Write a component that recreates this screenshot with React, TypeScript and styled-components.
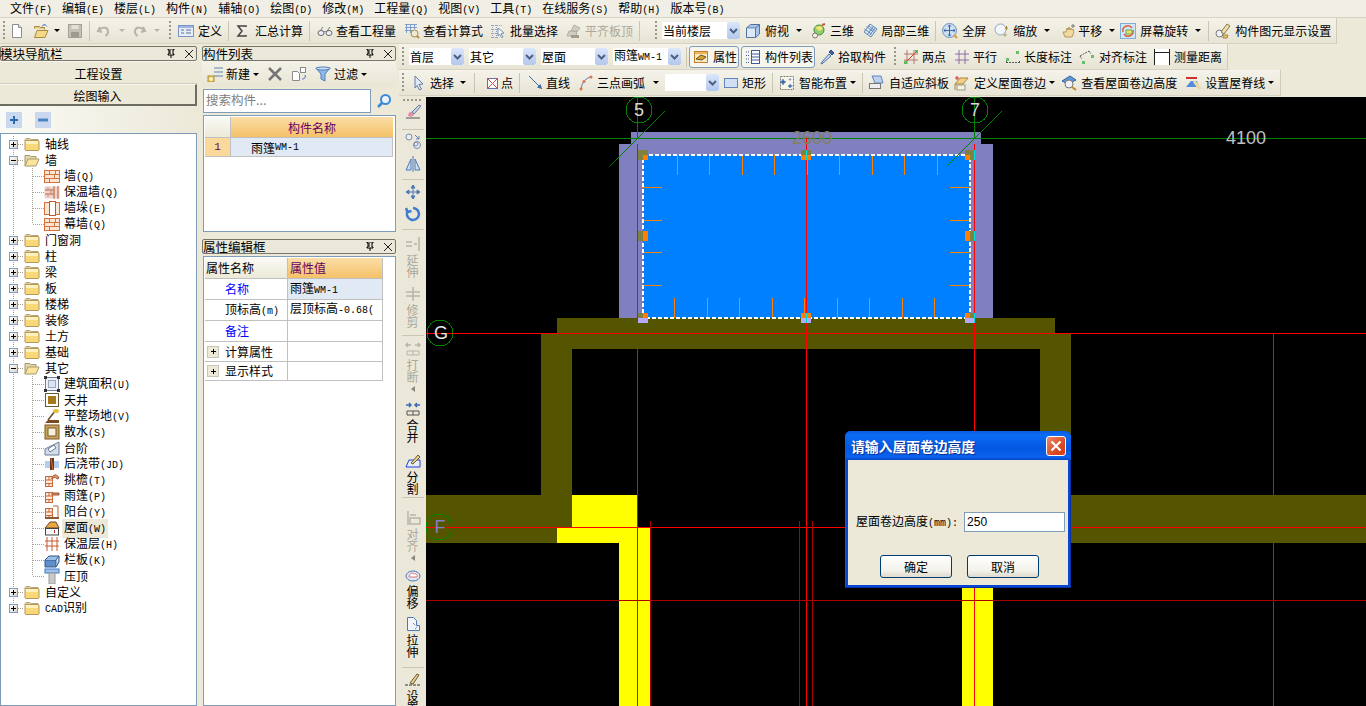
import React from 'react';
import styled, { createGlobalStyle } from 'styled-components';

const Global = createGlobalStyle`
  html, body { margin: 0; padding: 0; background: #ece9d8; overflow: hidden; }
  body { font-family: "Noto Sans CJK SC", "Liberation Sans", sans-serif; font-size: 12px; color: #000; }
  * { box-sizing: border-box; }
`;

const Root = styled.div`
  width: 1366px; height: 706px; overflow: hidden; display: flex; flex-direction: column; background: #ece9d8;
`;
const Latin = styled.span`
  font-family: "Liberation Mono", monospace; font-size: 10px;
`;
const T = ({ s }: { s: string }) => (
  <>
    {s.split(/([\x20-\x7e]+)/).map((p, i) => (/^[\x20-\x7e]+$/.test(p) ? <Latin key={i}>{p}</Latin> : p))}
  </>
);

/* ---------- icons ---------- */
const Svg = styled.svg`
  width: 16px; height: 16px; flex: none; display: block;
`;
const brick = (
  <>
    <rect x="0.500" y="2.500" width="15" height="12" fill="#fbe6d4" stroke="#d9703a" />
    <path d="M1 6.500h14M1 10.500h14M5.500 3v3.500M10.500 6.500v4M5.500 10.500v4M11.500 3v3.500" stroke="#d9703a" fill="none" />
  </>
);
const roofSide = (
  <>
    <rect x="1.500" y="4.500" width="7" height="10" fill="#fde7d6" stroke="#c9683a" />
    <path d="M2 8h6M2 11.500h6M5 5v3M5 11.500v3" stroke="#c9683a" />
  </>
);
const icons: Record<string, React.ReactNode> = {
  new: <><path d="M3.500 1.500h6l3 3v10h-9z" fill="#fff" stroke="#8d8d8d" /><path d="M9.500 1.500v3h3" fill="#dfe7f5" stroke="#8d8d8d" /></>,
  open: <><path d="M1.500 5.500l0-2h5l1 1h4v2" fill="#e8cf86" stroke="#a98a3c" /><path d="M1.500 14.500l2.500-7h11l-3 7z" fill="#f5d889" stroke="#a98a3c" /><path d="M9 3.500c1-2 3-2.500 4-1l1 1" stroke="#3e6fc6" fill="none" /></>,
  save: <><rect x="1.500" y="1.500" width="13" height="13" fill="#c4c2b4" stroke="#a3a195" /><rect x="4.500" y="2" width="7" height="4" fill="#e3e1d6" /><rect x="4" y="9" width="8" height="5" fill="#9d9b8f" /></>,
  undo: <path d="M4 4l-2 4 4 1M3 8c2-4 8-5 9 0 .4 2-1 4-2.500 5" fill="none" stroke="#b7b5a7" strokeWidth="2" />,
  redo: <path d="M12 4l2 4-4 1M13 8C11 4 5 3 4 8c-.4 2 1 4 2.500 5" fill="none" stroke="#b7b5a7" strokeWidth="2" />,
  define: <><rect x="0.500" y="2.500" width="15" height="11" fill="#e7eefa" stroke="#7a94c4" /><rect x="1" y="3" width="14" height="2" fill="#9fb7e0" /><path d="M3 7h3M3 10h3M8 7h5M8 10h5" stroke="#5a6f98" /></>,
  sigma: <path d="M12 4V3H4l4 5-4 5h8v-1" fill="none" stroke="#444" strokeWidth="1.500" />,
  glasses: <><ellipse cx="4" cy="10" rx="3" ry="2.500" fill="#eef" stroke="#666" /><ellipse cx="12" cy="10" rx="3" ry="2.500" fill="#eef" stroke="#666" /><path d="M7 9c1-1 1-1 2 0M3 8l3-4M10 8l3-4" stroke="#777" fill="none" /></>,
  calc: <><path d="M1 1.500h12M1 4.500h12M1 7.500h7M2.500 1v9M6.500 1v9M10.500 1v5" stroke="#7d9cd0" fill="none" /><circle cx="10.500" cy="10.500" r="3.500" fill="#f0ead0" stroke="#998b55" /><path d="M13 13l2 2" stroke="#c08a30" strokeWidth="2" /></>,
  batch: <><path d="M1 2.500h12M1 6.500h9M1 10.500h8M1 14.500h8M2.500 2v13M6.500 2v13" stroke="#8fa6c8" strokeDasharray="1 1" fill="none" /><path d="M8 5l6 5-3 .5 2 3.500-1.500.5-2-3.500-1.500 2z" fill="#fff" stroke="#7d8fb0" /></>,
  flatTop: <><path d="M1 13l2-5h8l-1 5zM5 8l3-6 6 3-3 4z" fill="#cfcdc0" stroke="#b3b1a3" /><rect x="5" y="12" width="8" height="3" fill="#9e9c90" /></>,
  cube: <><path d="M1.500 5l4-3.500h9V11l-4 3.500H1.500z" fill="#a9c5e8" stroke="#52749f" /><path d="M1.500 5h9v9.500M10.500 5l4-3.500" fill="none" stroke="#52749f" /><rect x="2" y="5.500" width="8" height="8.500" fill="#dde9f7" /></>,
  three: <><circle cx="8" cy="7" r="5" fill="#8fcf72" stroke="#4d8a3c" /><path d="M4 4l6-1 2 3-4 2z" fill="#f7e56d" /><circle cx="4" cy="12.500" r="2.500" fill="#f6f2e0" stroke="#777" /><path d="M11 2l3-1" stroke="#c05a3a" strokeWidth="2" /></>,
  local: <><path d="M8 1l7 5-6 8-7-5z" fill="#dbe8f7" stroke="#5e83b2" /><path d="M4.500 3.500l7 5.500M6.500 2.500l6 5M2.500 6l7 5M11 4l-6 8M13 5l-5 7" stroke="#5e83b2" fill="none" /></>,
  full: <><circle cx="7.500" cy="7.500" r="7" fill="#cfe0f5" stroke="#6f8fbd" /><path d="M7.500 2v11M2 7.500h11" stroke="#3e68a8" /><path d="M7.500 1.500l2 2h-4zM7.500 13.500l2-2h-4zM1.500 7.500l2 2v-4zM13.500 7.500l-2 2v-4z" fill="#3e68a8" /><path d="M12 12l3 3" stroke="#d89a3c" strokeWidth="2" /></>,
  zoom: <><circle cx="6.500" cy="6.500" r="5.500" fill="#f2f5fb" stroke="#9aa4b8" /><path d="M10 11l2 2" stroke="#b8b28e" strokeWidth="3" /><path d="M12.500 3v4M11 5h3" stroke="#a68a3c" /></>,
  pan: <><path d="M3 9l2 5h7l2-5-1-3-1 1-1-2-1 2-1-3-1 3-1-2-1 4z" fill="#f0d9a0" stroke="#b79a5a" /><path d="M11 3h4M13 1v4" stroke="#777" /></>,
  rotate: <><rect x="0.500" y="0.500" width="15" height="15" fill="#cfe6f8" stroke="#7fb0d8" /><path d="M3 9a5 5 0 019-4" fill="none" stroke="#e0603c" strokeWidth="1.500" /><path d="M13 7a5 5 0 01-9 4" fill="none" stroke="#e0603c" strokeWidth="1.500" /><path d="M6 7h6v4H6z" fill="#e8e06d" stroke="#6aa84f" /></>,
  display: <><circle cx="4.500" cy="10.500" r="3.500" fill="#eef2f8" stroke="#777" /><path d="M6 9l6-8 3 2-6 8z" fill="#e9dfb0" stroke="#8a7a3c" /><path d="M8 12h5l-1 3H8z" fill="#e9c26e" stroke="#a5844a" /></>,
  attr: <><rect x="1.500" y="2.500" width="13" height="11" fill="#f7e8c8" stroke="#c47f2c" /><rect x="2" y="3" width="12" height="2" fill="#eeb45c" /><path d="M3 10l5-4 5 2-4 3z" fill="#d3a530" stroke="#6a5818" /></>,
  list: <><path d="M1 3h3M1 6.500h3M1 10h3M1 13.500h3" stroke="#3c5f98" strokeDasharray="1 1" /><rect x="6.500" y="1.500" width="8" height="13" fill="#fff" stroke="#3c5f98" /><path d="M7 5h7M7 8h7M7 11h7" stroke="#3c5f98" /></>,
  pick: <><path d="M3 13l7-8 2 2-8 7-2 1z" fill="#cde" stroke="#4870a8" /><path d="M10 3l2-2 3 3-2 2z" fill="#3e68a8" stroke="#2d4a80" /></>,
  twoPt: <><path d="M4 1v14M11 1v14M1 5h14M1 11h14" stroke="#b07a70" /><path d="M2 14L14 2" stroke="#e03020" /><rect x="1" y="12" width="3" height="3" fill="#5cb85c" /><rect x="12" y="1" width="3" height="3" fill="#5cb85c" /></>,
  parallel: <path d="M5 1v14M11 1v14M1 5h14M1 11h14" stroke="#8a6fa8" fill="none" />,
  lenDim: <><rect x="11" y="2" width="3" height="3" fill="#66c066" /><rect x="1" y="9" width="3" height="3" fill="#66c066" /><path d="M1.500 12v3M14.500 12v3M1 13.500h14" stroke="#555" strokeDasharray="2 1" /></>,
  alignDim: <><rect x="12" y="6" width="3" height="3" fill="#66c066" /><rect x="3" y="12" width="3" height="3" fill="#66c066" /><path d="M1 7l9-5M1 7l2 3M10 2l2 3" stroke="#555" strokeDasharray="2 1" fill="none" /></>,
  measure: <><rect x="0" y="0" width="16" height="16" fill="#fff" /><path d="M.5 0v16M15.500 0v16M0 3.500h16" stroke="#222" /></>,
  cursor: <path d="M5 1l8 8-4 .5 2.500 4.500-2 1-2.500-4.500L5 13z" fill="#dfe8f7" stroke="#6a7fa6" />,
  point: <><rect x="3.500" y="3.500" width="10" height="10" fill="#fff" stroke="#6072a8" /><path d="M4 4l9 9M13 4l-9 9" stroke="#d84a4a" /></>,
  line: <><path d="M1 1l13 13" stroke="#3e68a8" /><path d="M14 14l-5-1.500 3.500-3.500z" fill="#3e68a8" /></>,
  arc: <><path d="M3 14C4 7 8 3 13 2" stroke="#5a78b0" fill="none" /><circle cx="3" cy="14" r="1.500" fill="#e07050" /><circle cx="6" cy="6.500" r="1.500" fill="#e07050" /><circle cx="13" cy="2" r="1.500" fill="#e07050" /></>,
  rect: <rect x="1.500" y="3.500" width="13" height="9" fill="#d2e0f5" stroke="#6484bc" />,
  smart: <><rect x="1.500" y="1.500" width="13" height="13" fill="#f8f6ec" stroke="#7a7a6a" strokeDasharray="2 1" /><path d="M4 4l1 2 2 1-2 1-1 2-1-2-2-1 2-1zM11 9l1 1.500 1.500.5-1.500.5-1 1.500-1-1.500L9 11l1.500-.5zM11 3v3M9.500 4.500h3" fill="#3e68a8" stroke="#3e68a8" strokeWidth=".5" /></>,
  slope: <><path d="M4 1h9l2 7H7z" fill="#bcd3f0" stroke="#6484bc" /><rect x="1.500" y="8.500" width="11" height="5" fill="#eee" stroke="#777" /></>,
  roofEdge: <><path d="M1 15V9h8l5-6h-8l-5 6" fill="#f0d08a" stroke="#a8863c" /><rect x="3" y="10" width="8" height="5" fill="#f6f2e0" stroke="#9a9a8a" /><path d="M3 1v4M1 3h4" stroke="#d03030" /></>,
  viewEdge: <><path d="M1 6l8-5 6 4-8 4z" fill="#5f96d8" stroke="#34649e" /><circle cx="8" cy="9" r="4" fill="#eef2f8" stroke="#777" /><path d="M11 12l4 3" stroke="#c08a30" strokeWidth="2" /></>,
  ridge: <><path d="M1 3h11" stroke="#d03030" strokeWidth="2" /><path d="M1 12l5-6h6l2 6z" fill="#4f8de0" /><path d="M9 6l6 8" stroke="#e8d9a0" strokeWidth="3" /></>,
  newItem: <><path d="M7 2h9M7 6h9M7 10h9" stroke="#5e83b2" /><rect x="1" y="10" width="6" height="6" fill="#f0d058" stroke="#b08a30" /><path d="M4 11v4M2 13h4" stroke="#fff" /></>,
  del: <path d="M2 2l12 12M14 2L2 14" stroke="#757575" strokeWidth="2.500" />,
  copy: <><path d="M1.500 5.500h5l2 2v7h-7z" fill="#fff" stroke="#8a8a8a" /><rect x="9.500" y="1.500" width="5" height="5" fill="#fff" stroke="#8a8a8a" /><path d="M14 9c1 3-1 4-3 4" stroke="#3e68c8" fill="none" /></>,
  filter: <><path d="M1 2h14l-5 6v7l-4-2V8z" fill="#8fb8e6" stroke="#4f7eb8" /><ellipse cx="8" cy="2.500" rx="7" ry="1.500" fill="#cfe2f7" stroke="#4f7eb8" /></>,
  search: <><circle cx="9.500" cy="6.500" r="4.500" fill="#eaf4fd" stroke="#3a8ad8" strokeWidth="2" /><path d="M6 10l-4 4" stroke="#3a8ad8" strokeWidth="2.500" /></>,
  plusBlue: <><rect x="0" y="0" width="16" height="16" fill="#c9d8ee" /><path d="M8 4v8M4 8h8" stroke="#2a6cb0" strokeWidth="2" /></>,
  minusBlue: <><rect x="0" y="0" width="16" height="16" fill="#c9d8ee" /><path d="M3 8h10" stroke="#4f84c0" strokeWidth="3" /></>,
  folder: <><path d="M1 5V3.500L2 2.500h4l1 1h7V5z" fill="#e0d5ad" stroke="#b3a476" /><rect x="1" y="4.500" width="14" height="10" rx="1" fill="#f8d878" stroke="#b49a55" /><rect x="2" y="5" width="12" height="3" fill="#fdf0bd" /></>,
  folderOpen: <><path d="M1 14V3.500h5l1 1h5V7" fill="#e0d5ad" stroke="#a89a6a" /><path d="M1 14l3-7h11l-3 7z" fill="#fbe59c" stroke="#a89a6a" /></>,
  wall: brick,
  insul: <><rect x="0.500" y="2.500" width="15" height="12" fill="#ecd3cf" /><path d="M10 2v13M14 2v13M1 6h9M1 10h9" stroke="#c4602f" fill="none" /><path d="M3 4h2M6 8h2M3 12h2" stroke="#b88" /></>,
  pier: <><rect x="0.500" y="2.500" width="15" height="12" fill="#fbe6d4" stroke="#d9703a" /><rect x="5.500" y="1.500" width="6" height="14" fill="#fff" stroke="#c05a2a" /></>,
  area: <><rect x="1.500" y="1.500" width="13" height="13" fill="#eef2f8" stroke="#6f7f98" /><rect x="4.500" y="4.500" width="7" height="7" fill="#dbe4f0" stroke="#9aa8bc" /><path d="M0 0h3v3H0zM13 0h3v3h-3zM0 13h3v3H0zM13 13h3v3h-3z" fill="#333" /></>,
  well: <><rect x="1.500" y="1.500" width="13" height="13" fill="#fff" stroke="#6a5a30" /><rect x="4" y="4" width="8" height="8" fill="#a8791a" /></>,
  site: <><path d="M1 15l3-3h11v3z" fill="#7a4a20" /><path d="M4 12l7-9" stroke="#6a4a20" strokeWidth="1.500" /><ellipse cx="12" cy="3" rx="3" ry="2" fill="#e8c040" /></>,
  drain: <><rect x="1" y="1" width="14" height="14" fill="#c9a25e" stroke="#7a5a20" /><rect x="4" y="4" width="8" height="8" fill="#f4f0e0" stroke="#7a5a20" /></>,
  steps: <><path d="M1 15V9l6-3 8-4v13z" fill="#d3ddea" stroke="#6a7a98" /><path d="M4 9l6-4 2 3-6 4z" fill="#fff" stroke="#6a7a98" /></>,
  band: <><rect x="1" y="5" width="14" height="7" fill="#b5cdea" /><rect x="6" y="2" width="4" height="12" fill="#6a3418" /><path d="M7 2l2 12" stroke="#d9703a" /></>,
  eaves: <>{roofSide}<path d="M8 5c2-3 5-3 7 1l-2 1c-1-2-3-2-5 0z" fill="#e0956a" stroke="#a05a30" /></>,
  canopy: <>{roofSide}<path d="M8 5h7v2H8z" fill="#d08a60" stroke="#a05a30" /></>,
  balcony: <>{roofSide}<path d="M1 14h14" stroke="#8a5a30" strokeWidth="2" /><path d="M9 2h5v12" stroke="#b0663a" fill="none" /></>,
  roof: <><path d="M1 8l5-6h6l3 6z" fill="#e8a848" stroke="#6a4a20" /><rect x="1.500" y="8.500" width="13" height="6.500" fill="#f8f8f8" stroke="#444" /><rect x="10" y="10" width="1" height="3" fill="#c03030" /></>,
  insLayer: <path d="M3 1v14M8 1v14M13 1v14M1 5h14M1 10h14" stroke="#c85a30" fill="none" />,
  rail: <><path d="M1 8h11v7H1z" fill="#5f8ec8" stroke="#2d5a90" /><path d="M1 8l4-4h10l-3 4M15 4v6l-3 5" fill="#9dbfe6" stroke="#2d5a90" /></>,
  cap: <><rect x="1" y="1" width="14" height="4" fill="#9fc4ee" stroke="#3e7ac8" /><rect x="5" y="5" width="6" height="11" fill="#c9c9c9" stroke="#999" /></>,
  brush: <><path d="M1 14h14" stroke="#555" /><path d="M3 12c0-3 2-5 4-4l2 3c-1 2-4 2-6 1z" fill="#e090a8" /><path d="M7 8l7-7 2 1-7 8z" fill="#c8d8ec" stroke="#6a7a98" /></>,
  offsetC: <><circle cx="4" cy="4" r="3" fill="#e8eef8" stroke="#7a8aa8" /><circle cx="12" cy="12" r="3.500" fill="#e8eef8" stroke="#7a8aa8" /><circle cx="11" cy="11" r="2" fill="none" stroke="#7a8aa8" /><path d="M10 2l4 4m0-3v3h-3" fill="none" stroke="#5e83b2" /></>,
  mirror: <path d="M8 0v16M6 3L1 14h5zM10 3l5 11h-5z" fill="#cfdff3" stroke="#4f78b8" />,
  move: <path d="M8 1v14M1 8h14M8 1l-2 3h4zM8 15l-2-3h4zM1 8l3-2v4zM15 8l-3-2v4z" fill="#4f78b8" stroke="#4f78b8" />,
  spin: <path d="M8 2a6 6 0 11-5.500 3.500M1 2l1.500 4 4-1" fill="none" stroke="#3e7ad0" strokeWidth="2.500" />,
  extend: <path d="M1 6h6M1 10h6M9 8h3M14 1v14" stroke="#b7b5a7" strokeWidth="1.500" fill="none" />,
  trim: <path d="M1 6h14M1 10h14M8 1v14" stroke="#b7b5a7" strokeWidth="1.500" fill="none" />,
  breakI: <><path d="M1 4h5M10 4h5M3 2L1 4l2 2M13 2l2 2-2 2" stroke="#b7b5a7" fill="none" strokeWidth="1.500" /><path d="M2 10h12v4H2zM8 10v4" stroke="#b7b5a7" fill="none" /></>,
  merge: <><path d="M1 4h5M10 4h5M4 2l2 2-2 2M12 2l-2 2 2 2" stroke="#3e68b8" fill="none" strokeWidth="1.500" /><path d="M2 10h12v4H2zM8 10v4" stroke="#555" fill="none" /></>,
  split: <><path d="M1 14l3-7h11v7z" fill="#e8eef8" stroke="#2040e0" /><path d="M6 10L13 2l2 2-7 7z" fill="#e8d090" stroke="#6a5a30" /></>,
  alignI: <path d="M3 1v14M5 8h10v6H5zM5 5h6" stroke="#b7b5a7" fill="none" strokeWidth="1.500" />,
  cloud: <><ellipse cx="8" cy="9" rx="7" ry="5" fill="#dfe9f6" stroke="#4f78b8" /><path d="M4 10c0-3 3-5 5-3 2-1 4 1 3 3z" fill="#fff" stroke="#e07070" /></>,
  stretch: <><path d="M2.500 1.500h6l3 3v5h3v5h-12z" fill="#f2f6fc" stroke="#4f78b8" /><path d="M8 7l3 3M10 13l3-3" stroke="#555" strokeDasharray="1 1" /></>,
  setI: <><path d="M0 13h16" stroke="#333" strokeDasharray="3 1" /><path d="M5 11l7-9 2 1-6 9z" fill="#e8d090" stroke="#6a5a30" /></>,
};
const Icon = ({ n }: { n: string }) => <Svg viewBox="0 0 16 16">{icons[n]}</Svg>;

/* ---------- menu + toolbars ---------- */
const MenuBar = styled.div`
  height: 17px; flex: none; display: flex; align-items: center; gap: 10px; padding: 1px 0 0 10px;
  background: #f1efe5; line-height: 16px;
`;
const MenuItem = styled.span`white-space: nowrap;`;
const TopStrip = styled.div`
  height: 27px; flex: none; background: #ece9d8; border-top: 1px solid #d6d3c2;
`;
const Bar = styled.div`
  display: flex; align-items: center; height: 26px; width: fit-content; padding-right: 5px;
  background: linear-gradient(#f5f3ea, #e7e4d4); border-right: 1px solid #cfccb9; border-bottom: 1px solid #d6d3c2;
`;
const Tool = styled.div<{ $ml: number; $gap: number; $off?: boolean }>`
  display: flex; align-items: center; flex: none; margin-left: ${p => p.$ml}px; gap: ${p => p.$gap}px;
  white-space: nowrap; color: ${p => (p.$off ? '#aca899' : '#000')}; line-height: 16px;
`;
const Toggle = styled(Tool)`
  height: 22px; padding: 0 1px 0 3px; border: 1px solid #7f9db9; border-radius: 3px; background: #f6f5ee;
`;
const CaretMark = styled.i<{ $ml: number; $off?: boolean }>`
  flex: none; width: 0; height: 0; margin-left: ${p => p.$ml}px; margin-right: 1px;
  border-left: 3px solid transparent; border-right: 3px solid transparent;
  border-top: 3px solid ${p => (p.$off ? '#b7b5a7' : '#000')};
`;
const Sep = styled.i<{ $ml: number }>`
  flex: none; width: 1px; height: 20px; margin-left: ${p => p.$ml}px; background: #c9c6b4;
`;
const Grip = styled.i<{ $ml: number }>`
  flex: none; width: 2px; height: 19px; margin-left: ${p => p.$ml}px;
  background: repeating-linear-gradient(to bottom, #9a9884 0 2px, transparent 2px 4px);
`;
const Combo = styled.div<{ $ml: number; $w: number }>`
  flex: none; display: flex; align-items: center; justify-content: space-between; height: 17px;
  margin-left: ${p => p.$ml}px; width: ${p => p.$w}px; padding-left: 1px; background: #fff; line-height: 16px; white-space: nowrap;
`;
const ComboArrow = styled.span`
  flex: none; width: 13px; height: 17px; border-radius: 2px; background: linear-gradient(#dbe6f9, #b3c8ee);
  display: flex; align-items: center; justify-content: center;
`;
const Arrow = () => (
  <ComboArrow>
    <svg width="9" height="6" viewBox="0 0 9 6"><path d="M1 1l3.500 3.500L8 1" fill="none" stroke="#4d6185" strokeWidth="2" /></svg>
  </ComboArrow>
);

type Item =
  | { k: 'tool'; ml: number; gap?: number; icon: string; label?: string; off?: boolean; on?: boolean }
  | { k: 'caret'; ml: number; off?: boolean }
  | { k: 'sep'; ml: number }
  | { k: 'grip'; ml: number }
  | { k: 'combo'; ml: number; w: number; text: string };

const tool = (ml: number, icon: string, label?: string, gap = 3, off = false): Item => ({ k: 'tool', ml, icon, label, gap, off });
const caret = (ml: number, off = false): Item => ({ k: 'caret', ml, off });
const sep = (ml: number): Item => ({ k: 'sep', ml });
const grip = (ml: number): Item => ({ k: 'grip', ml });
const combo = (ml: number, w: number, text: string): Item => ({ k: 'combo', ml, w, text });

const Items = ({ items }: { items: Item[] }) => (
  <>
    {items.map((it, i) => {
      if (it.k === 'caret') return <CaretMark key={i} $ml={it.ml} $off={it.off} />;
      if (it.k === 'sep') return <Sep key={i} $ml={it.ml} />;
      if (it.k === 'grip') return <Grip key={i} $ml={it.ml} />;
      if (it.k === 'combo') return <Combo key={i} $ml={it.ml} $w={it.w}><span><T s={it.text} /></span><Arrow /></Combo>;
      const C = it.on ? Toggle : Tool;
      return (
        <C key={i} $ml={it.ml} $gap={it.gap ?? 3} $off={it.off}>
          <Icon n={it.icon} />
          {it.label && <span><T s={it.label} /></span>}
        </C>
      );
    })}
  </>
);

const row1: Item[] = [
  grip(3), tool(4, 'new'), tool(8, 'open'), caret(5), tool(6, 'save', undefined, 3, true), sep(6),
  tool(6, 'undo', undefined, 3, true), caret(7, true), tool(5, 'redo', undefined, 3, true), caret(7, true), grip(8),
  tool(7, 'define', '定义', 4), sep(6), tool(5, 'sigma', '汇总计算', 5), sep(6), tool(7, 'glasses', '查看工程量', 3),
  tool(8, 'calc', '查看计算式', 3), tool(7, 'batch', '批量选择', 4), tool(8, 'flatTop', '平齐板顶', 3, true), sep(6),
  grip(15), combo(5, 78, '当前楼层'), tool(5, 'cube', '俯视', 4), caret(7), tool(8, 'three', '三维'), tool(8, 'local', '局部三维'),
  sep(6), tool(6, 'full', '全屏', 4), tool(8, 'zoom', '缩放'), caret(7), tool(9, 'pan', '平移', 2), caret(7),
  tool(4, 'rotate', '屏幕旋转', 4), caret(7), sep(6), tool(6, 'display', '构件图元显示设置', 4),
];
const row2: Item[] = [
  grip(3), combo(5, 55, '首层'), combo(5, 67, '其它'), combo(5, 67, '屋面'), combo(5, 68, '雨篷WM-1'), sep(5),
  { k: 'tool', ml: 2, icon: 'attr', label: '属性', gap: 4, on: true },
  { k: 'tool', ml: 2, icon: 'list', label: '构件列表', gap: 4, on: true },
  tool(4, 'pick', '拾取构件'), grip(8), tool(7, 'twoPt', '两点'), tool(8, 'parallel', '平行'), tool(8, 'lenDim', '长度标注'),
  tool(7, 'alignDim', '对齐标注', 4), tool(7, 'measure', '测量距离', 4),
];
const row3: Item[] = [
  grip(3), tool(6, 'cursor', '选择', 4), caret(6), sep(7), tool(9, 'point', '点', 1), sep(6), tool(8, 'line', '直线', 2),
  tool(8, 'arc', '三点画弧'), caret(8), combo(5, 54, ''), tool(4, 'rect', '矩形'), sep(6), tool(6, 'smart', '智能布置', 4), caret(3),
  sep(5), tool(5, 'slope', '自适应斜板', 5), tool(5, 'roofEdge', '定义屋面卷边', 4), caret(3), tool(5, 'viewEdge', '查看屋面卷边高度', 4),
  tool(8, 'ridge', '设置屋脊线', 4), caret(3),
];

/* ---------- panels ---------- */
const Body = styled.div`flex: 1; min-height: 0; display: flex;`;
const NavCol = styled.div`width: 197px; flex: none; padding-top: 2px; display: flex; flex-direction: column;`;
const MidCol = styled.div`width: 194px; flex: none; margin-left: 5px; padding-top: 2px; display: flex; flex-direction: column;`;
const RightCol = styled.div`flex: 1; min-width: 0; margin-left: 3px; display: flex; flex-direction: column;`;
const PanelTitle = styled.div<{ $mt?: number }>`
  height: 15px; flex: none; margin-top: ${p => p.$mt ?? 0}px; display: flex; align-items: center;
  border: 1px solid #77766a; border-radius: 2px; background: #ebe8da; line-height: 13px;
`;
const PanelName = styled.span<{ $dx?: number }>`flex: 1; font-size: 12.5px; margin-left: ${p => p.$dx ?? 0}px; white-space: nowrap;`;
const TitleIcons = styled.span`display: flex; align-items: center; gap: 10px; margin-right: 3px;`;
const Mini = () => (
  <TitleIcons>
    <svg width="8" height="9" viewBox="0 0 8 9"><path d="M1 0h6v1H6v4h1v1H1V5h1V1H1zM3 1v4M4 6v3" fill="none" stroke="#000" /></svg>
    <svg width="8" height="8" viewBox="0 0 8 8"><path d="M0 0l8 8M8 0L0 8" stroke="#222" /></svg>
  </TitleIcons>
);
const NavBtn = styled.div<{ $h: number; $pressed?: boolean }>`
  height: ${p => p.$h}px; flex: none; display: flex; align-items: center; justify-content: center; padding-top: 1px;
  background: #ece9d8; border-top: 1px solid #f8f7f0;
  ${p => (p.$pressed ? 'border-bottom: 2px solid #6e6d62; border-right: 2px solid #6e6d62;' : 'border-bottom: 1px solid #d0cdbc;')}
`;
const TreeTools = styled.div`
  height: 27px; flex: none; display: flex; align-items: center; gap: 13px; padding-left: 6px;
  background: linear-gradient(to right, #fafaf6, #ece9d8);
`;
const TreeBox = styled.div`
  flex: 1; min-height: 0; border: 1px solid #7f9db9; background: #fff; padding-top: 2px; overflow: hidden;
`;
const dotted = 'repeating-linear-gradient(to bottom, #a5a395 0 1px, transparent 1px 2px)';
const TreeRow = styled.div<{ $leaf?: boolean; $lastTop?: boolean; $lastLeaf?: boolean }>`
  height: 16px; display: flex; align-items: center; padding-left: ${p => (p.$leaf ? 32 : 8)}px; white-space: nowrap; line-height: 16px;
  background-image: ${dotted}${p => (p.$leaf ? `, ${dotted}` : '')};
  background-repeat: no-repeat;
  background-position: 12px 0${p => (p.$leaf ? ', 31px 0' : '')};
  background-size: 1px ${p => (p.$lastTop ? '50%' : '100%')}${p => (p.$leaf ? `, 1px ${p.$lastLeaf ? '50%' : '100%'}` : '')};
`;
const Expander = styled.span`
  width: 9px; height: 9px; flex: none; border: 1px solid #7f9db9; background: linear-gradient(135deg, #fff, #d8d5c6);
  display: flex; align-items: center; justify-content: center;
`;
const Sign = ({ open }: { open?: boolean }) => (
  <svg width="7" height="7" viewBox="0 0 7 7"><path d={open ? 'M1 3.500h5' : 'M1 3.500h5M3.500 1v5'} stroke="#000" /></svg>
);
const Elbow = styled.span<{ $w: number }>`
  flex: none; width: ${p => p.$w}px; height: 1px; background: repeating-linear-gradient(to right, #a5a395 0 1px, transparent 1px 2px);
`;
const NodeLabel = styled.span<{ $sel?: boolean }>`
  margin-left: 2px; padding: 0 2px; background: ${p => (p.$sel ? '#ece9d8' : 'transparent')};
`;
const FolderLabel = styled.span`margin-left: 5px;`;

type N = { f?: boolean; open?: boolean; label: string; icon?: string; sel?: boolean; last?: boolean };
const tree: N[] = [
  { f: true, label: '轴线' }, { f: true, open: true, label: '墙' },
  { label: '墙(Q)', icon: 'wall' }, { label: '保温墙(Q)', icon: 'insul' }, { label: '墙垛(E)', icon: 'pier' }, { label: '幕墙(Q)', icon: 'wall', last: true },
  { f: true, label: '门窗洞' }, { f: true, label: '柱' }, { f: true, label: '梁' }, { f: true, label: '板' }, { f: true, label: '楼梯' },
  { f: true, label: '装修' }, { f: true, label: '土方' }, { f: true, label: '基础' }, { f: true, open: true, label: '其它' },
  { label: '建筑面积(U)', icon: 'area' }, { label: '天井', icon: 'well' }, { label: '平整场地(V)', icon: 'site' }, { label: '散水(S)', icon: 'drain' },
  { label: '台阶', icon: 'steps' }, { label: '后浇带(JD)', icon: 'band' }, { label: '挑檐(T)', icon: 'eaves' }, { label: '雨篷(P)', icon: 'canopy' },
  { label: '阳台(Y)', icon: 'balcony' }, { label: '屋面(W)', icon: 'roof', sel: true }, { label: '保温层(H)', icon: 'insLayer' }, { label: '栏板(K)', icon: 'rail' },
  { label: '压顶', icon: 'cap', last: true }, { f: true, label: '自定义' }, { f: true, label: 'CAD识别', last: true },
];

const SmallBar = styled.div`
  height: 26px; flex: none; display: flex; align-items: center; background: linear-gradient(#f4f2e8, #e8e5d5);
`;
const SearchRow = styled.div`height: 24px; flex: none; margin-top: 2px; display: flex; align-items: center; padding-left: 1px;`;
const SearchBox = styled.div`
  width: 168px; height: 24px; border: 1px solid #7f9db9; background: #fff; color: #808080; padding-left: 2px; line-height: 20px; font-size: 12.5px;
`;
const SearchIcon = styled.span`margin-left: 5px; display: block;`;
const Box = styled.div<{ $h?: number; $mt: number }>`
  margin-top: ${p => p.$mt}px; margin-left: 1px; width: 193px; border: 1px solid #7f9db9; background: #fff; padding: 1px;
  ${p => (p.$h ? `height: ${p.$h}px; flex: none;` : 'flex: 1; min-height: 0;')}
`;
const ListGrid = styled.div`display: grid; grid-template-columns: 26px 162px; grid-template-rows: 21px 19px;`;
const Gold = 'linear-gradient(#fbdea6, #f4c168)';
const Corner = styled.div`background: linear-gradient(#fafaf5, #ece9d8); border-right: 1px solid #c0c0c0; border-bottom: 1px solid #c0c0c0;`;
const HeadCell = styled.div`
  background: ${Gold}; color: #660066; display: flex; align-items: center; justify-content: center; border-bottom: 1px solid #c0c0c0;
`;
const NumCell = styled.div`
  background: #fbd99a; color: #660066; display: flex; align-items: center; justify-content: center;
  border-right: 1px solid #c0c0c0; border-bottom: 1px solid #c0c0c0; font-family: "Liberation Mono", monospace; font-size: 11px;
`;
const NameCell = styled.div`
  background: #e0e9f4; padding-left: 20px; display: flex; align-items: center; border-bottom: 1px solid #c0c0c0; border-right: 1px solid #c0c0c0;
`;
const PropGrid = styled.div`
  display: grid; grid-template-columns: 83px 95px; grid-template-rows: 21px 21px 21px 21px 20px 19px; width: 178px; line-height: 16px;
`;
const PCell = styled.div<{ $v: 'name' | 'blue' | 'plain' | 'head' | 'headV' | 'val' | 'valHi'; $top?: boolean }>`
  display: flex; align-items: ${p => (p.$top ? 'flex-start' : 'center')}; overflow: hidden; white-space: nowrap;
  border-right: 1px solid #c0c0c0; border-bottom: 1px solid #c0c0c0;
  padding-left: ${p => (p.$v === 'head' ? 1 : p.$v === 'blue' || p.$v === 'plain' ? 20 : 2)}px;
  color: ${p => (p.$v === 'blue' ? '#0000ff' : p.$v === 'headV' ? '#660066' : '#000')};
  background: ${p =>
    p.$v === 'head' ? 'linear-gradient(#fafaf5, #ece9d8)' : p.$v === 'headV' ? Gold : p.$v === 'valHi' ? '#e0e9f4' : '#fff'};
`;
const PlusBox = styled.span`
  width: 12px; height: 12px; flex: none; margin-right: 6px; background: #ece9d8; border: 1px solid #c8c6b6;
  display: flex; align-items: center; justify-content: center;
`;

/* ---------- vertical toolbar ---------- */
const Work = styled.div`flex: 1; min-height: 0; display: flex; padding-top: 1px;`;
const VBar = styled.div`
  width: 27px; flex: none; height: 610px; overflow: hidden; background: #ebe8da; display: flex; flex-direction: column; align-items: center;
  color: #000;
`;
const VGrip = styled.i`
  flex: none; width: 20px; height: 2px; margin-top: 2px;
  background: repeating-linear-gradient(to right, #9a9884 0 2px, transparent 2px 4px);
`;
const VSep = styled.i<{ $mt: number }>`flex: none; width: 22px; height: 1px; margin-top: ${p => p.$mt}px; background: #c9c6b4;`;
const VIco = styled.div<{ $mt: number }>`flex: none; margin-top: ${p => p.$mt}px;`;
const VText = styled.div<{ $off?: boolean }>`
  flex: none; width: 12px; line-height: 12px; margin-top: 2px; word-break: break-all; color: ${p => (p.$off ? '#aca899' : '#000')};
`;
const VTri = styled.i`
  flex: none; width: 0; height: 0; margin-top: 3px; border-top: 3px solid transparent; border-bottom: 3px solid transparent; border-right: 4px solid #8a8878;
`;

const V = ({ mt, n, t, off, tri }: { mt: number; n: string; t?: string; off?: boolean; tri?: boolean }) => (
  <>
    <VIco $mt={mt}><Icon n={n} /></VIco>
    {t && <VText $off={off}>{t}</VText>}
    {tri && <VTri />}
  </>
);

/* ---------- canvas ---------- */
const CanvasWrap = styled.div`position: relative; flex: 1; min-width: 0; height: 610px; background: #000; overflow: hidden;`;
const Drawing = styled.svg`display: block; width: 940px; height: 610px;`;

const Dialog = styled.div`
  position: absolute; left: 419px; top: 334px; width: 226px; height: 157px; display: flex; flex-direction: column;
  background: #0a46d6; border-radius: 6px 6px 0 0; box-shadow: inset -1px -1px 0 #0832a0, inset 1px 0 0 #0a5ae0;
  padding: 0 3px 3px; 
`;
const DlgHead = styled.div`
  height: 29px; flex: none; margin: 0 -3px; padding: 0 5px 0 6px; display: flex; align-items: center; justify-content: space-between;
  border-radius: 6px 6px 0 0; background: linear-gradient(#0a5ce0, #0a6bf5 15%, #0457e0 60%, #0a62ee 90%, #0345c8);
  color: #fff; font-weight: 700; font-size: 13.8px; text-shadow: 1px 1px 0 #0a2f90;
`;
const DlgClose = styled.span`
  width: 20px; height: 20px; border: 1px solid #fff; border-radius: 3px; background: linear-gradient(135deg, #e98a6a, #d8431c 70%);
  display: flex; align-items: center; justify-content: center;
`;
const DlgBody = styled.div`flex: 1; background: #ece9d8; display: flex; flex-direction: column;`;
const DlgRow = styled.div`margin-top: 52px; display: flex; align-items: center; padding-left: 8px; line-height: 16px; white-space: nowrap;`;
const DlgInput = styled.div`
  width: 101px; height: 20px; margin-left: 6px; border: 1px solid #7f9db9; background: #fff; padding-left: 2px; line-height: 18px;
  font-family: "Liberation Sans", sans-serif; font-size: 12px;
`;
const DlgBtns = styled.div`margin-top: 23px; display: flex; gap: 15px; padding-left: 32px;`;
const DlgBtn = styled.div`
  width: 72px; height: 23px; border: 1px solid #003c74; border-radius: 3px; background: linear-gradient(#fff, #f2f1ea 70%, #dedbcc);
  display: flex; align-items: center; justify-content: center;
`;

const ticksTop = [677, 709, 742, 774, 807, 839, 872, 904, 937];
const ticksBot = [674, 707, 739, 772, 804, 837, 869, 902, 934];
const ticksSide = [187, 220, 252, 285];
const OLIVE = '#555500', YEL = '#ffff00', PUR = '#8080c0', ORG = '#ff8000', LIL = '#b4a8ff', HOL = '#808040', GRN = '#008000', RED = '#ff0000', DRED = '#aa0000';
const R = (x: number, y: number, x2: number, y2: number, fill: string) => <rect x={x} y={y} width={x2 - x} height={y2 - y} fill={fill} />;
const HLine = (y: number, c: string) => R(426, y, 1366, y + 1, c);
const VLine = (x: number, y: number, y2: number, c: string) => R(x, y, x + 1, y2, c);

const Canvas = () => (
  <Drawing viewBox="426 97 940 610" shapeRendering="crispEdges">
    {R(557, 318, 1055, 349, OLIVE)}
    {R(541, 333, 572, 543, OLIVE)}
    {R(1040, 333, 1071, 543, OLIVE)}
    {R(426, 495, 572, 527, OLIVE)}
    {R(426, 527, 557, 543, OLIVE)}
    {R(1071, 495, 1366, 543, OLIVE)}
    {R(572, 495, 637, 528, YEL)}
    {R(557, 528, 650, 543, YEL)}
    {R(619, 543, 650, 707, YEL)}
    {R(962, 543, 993, 707, YEL)}
    {R(631, 132, 981, 144, PUR)}
    {R(619, 144, 993, 318, PUR)}
    {R(643, 155, 970, 318, '#0080ff')}
    {ticksTop.map(x => <rect key={x} x={x} y={155} width={1} height={20} fill={ORG} />)}
    {ticksBot.map(x => <rect key={x} x={x} y={298} width={1} height={20} fill={ORG} />)}
    {ticksSide.map(y => <rect key={y} x={642} y={y} width={20} height={1} fill={ORG} />)}
    {ticksSide.map(y => <rect key={y} x={950} y={y} width={20} height={1} fill={ORG} />)}
    <rect x={643} y={155} width={327} height={163} fill="none" stroke="#fff" strokeWidth={2} strokeDasharray="4 2" />

    <g stroke={GRN} fill="none">
      <circle cx={639} cy={110} r={13} />
      <circle cx={975} cy={110} r={13} />
      <circle cx={440} cy={333} r={13} />
      <circle cx={439} cy={527} r={13} />
      <path d="M610 166L665 111M947 166L1002 111" />
    </g>
    {HLine(138, GRN)}
    {VLine(637, 97, 139, GRN)}
    {VLine(974, 97, 139, GRN)}
    {HLine(333, RED)}
    {HLine(527, RED)}
    {VLine(637, 144, 707, RED)}
    {VLine(806, 138, 707, RED)}
    {VLine(974, 144, 707, RED)}
    {VLine(1273, 333, 707, RED)}
    {HLine(600, DRED)}
    {VLine(650, 521, 707, DRED)}
    {VLine(799, 521, 707, DRED)}
    {VLine(812, 521, 707, DRED)}

    {R(638, 150, 648, 160, HOL)}{R(643, 155, 648, 160, ORG)}
    {R(801, 150, 811, 155, HOL)}{R(801, 155, 811, 160, ORG)}
    {R(965, 150, 975, 160, HOL)}{R(965, 155, 970, 160, ORG)}
    {R(638, 231, 643, 241, HOL)}{R(643, 231, 648, 241, ORG)}
    {R(965, 231, 970, 241, ORG)}{R(970, 231, 975, 241, HOL)}
    {R(638, 313, 643, 318, HOL)}{R(643, 313, 648, 318, ORG)}{R(638, 318, 648, 323, LIL)}
    {R(801, 313, 811, 318, ORG)}{R(801, 318, 811, 323, LIL)}
    {R(965, 313, 970, 318, ORG)}{R(970, 313, 975, 318, HOL)}{R(965, 318, 975, 323, LIL)}
    {[150, 313].map(y => <rect key={y} x={806} y={y} width={1} height={10} fill="#00e0e0" />)}
    {[150, 231, 313].map(y => <rect key={y} x={974} y={y} width={1} height={10} fill="#00e0e0" />)}

    <g fontFamily="Liberation Sans, sans-serif" fontSize="18" shapeRendering="auto">
      <text x={639} y={116} fill="#d8d8d8" textAnchor="middle">5</text>
      <text x={975} y={116} fill="#d8d8d8" textAnchor="middle">7</text>
      <text x={441} y={339} fill="#e8e8e8" textAnchor="middle">G</text>
      <text x={440} y={533} fill={PUR} textAnchor="middle">F</text>
      <text x={812} y={144} fill="#807f60" textAnchor="middle">2600</text>
      <text x={1246} y={144} fill="#c0c0c0" textAnchor="middle">4100</text>
    </g>
  </Drawing>
);

export default function App() {
  return (
    <Root>
      <Global />
      <MenuBar>
        {['文件(F)', '编辑(E)', '楼层(L)', '构件(N)', '辅轴(O)', '绘图(D)', '修改(M)', '工程量(Q)', '视图(V)', '工具(T)', '在线服务(S)', '帮助(H)', '版本号(B)'].map(m => (
          <MenuItem key={m}><T s={m} /></MenuItem>
        ))}
      </MenuBar>
      <TopStrip>
        <Bar><Items items={row1} /></Bar>
      </TopStrip>
      <Body>
        <NavCol>
          <PanelTitle><PanelName $dx={-1}>模块导航栏</PanelName><Mini /></PanelTitle>
          <NavBtn $h={23}>工程设置</NavBtn>
          <NavBtn $h={22} $pressed>绘图输入</NavBtn>
          <TreeTools><Icon n="plusBlue" /><Icon n="minusBlue" /></TreeTools>
          <TreeBox>
            {tree.map((n, i) =>
              n.f ? (
                <TreeRow key={i} $lastTop={n.last}>
                  <Expander><Sign open={n.open} /></Expander>
                  <Elbow $w={6} />
                  <Icon n={n.open ? 'folderOpen' : 'folder'} />
                  <FolderLabel><T s={n.label} /></FolderLabel>
                </TreeRow>
              ) : (
                <TreeRow key={i} $leaf $lastLeaf={n.last}>
                  <Elbow $w={11} />
                  <Icon n={n.icon!} />
                  <NodeLabel $sel={n.sel}><T s={n.label} /></NodeLabel>
                </TreeRow>
              ),
            )}
          </TreeBox>
        </NavCol>
        <MidCol>
          <PanelTitle><PanelName>构件列表</PanelName><Mini /></PanelTitle>
          <SmallBar>
            <Items items={[tool(5, 'newItem', '新建', 3), caret(3), tool(7, 'del'), tool(8, 'copy'), tool(8, 'filter', '过滤', 3), caret(3)]} />
          </SmallBar>
          <SearchRow>
            <SearchBox>搜索构件...</SearchBox>
            <SearchIcon><Icon n="search" /></SearchIcon>
          </SearchRow>
          <Box $h={117} $mt={2}>
            <ListGrid>
              <Corner />
              <HeadCell>构件名称</HeadCell>
              <NumCell>1</NumCell>
              <NameCell><T s="雨篷WM-1" /></NameCell>
            </ListGrid>
          </Box>
          <PanelTitle $mt={7}><PanelName>属性编辑框</PanelName><Mini /></PanelTitle>
          <Box $mt={2}>
            <PropGrid>
              <PCell $v="head">属性名称</PCell>
              <PCell $v="headV">属性值</PCell>
              <PCell $v="blue">名称</PCell>
              <PCell $v="valHi"><span><T s="雨篷WM-1" /></span></PCell>
              <PCell $v="plain"><span><T s="顶标高(m)" /></span></PCell>
              <PCell $v="val" $top><span><T s="层顶标高-0.68(" /></span></PCell>
              <PCell $v="blue">备注</PCell>
              <PCell $v="val" />
              <PCell $v="name"><PlusBox><Sign /></PlusBox>计算属性</PCell>
              <PCell $v="val" />
              <PCell $v="name"><PlusBox><Sign /></PlusBox>显示样式</PCell>
              <PCell $v="val" />
            </PropGrid>
          </Box>
        </MidCol>
        <RightCol>
          <Bar><Items items={row2} /></Bar>
          <Bar><Items items={row3} /></Bar>
          <Work>
            <VBar>
              <VGrip />
              <V mt={3} n="brush" />
              <VSep $mt={9} />
              <V mt={3} n="offsetC" />
              <V mt={7} n="mirror" />
              <VSep $mt={7} />
              <V mt={4} n="move" />
              <V mt={6} n="spin" />
              <VSep $mt={7} />
              <V mt={6} n="extend" t="延伸" off />
              <V mt={8} n="trim" t="修剪" off />
              <VSep $mt={7} />
              <V mt={5} n="breakI" t="打断" off tri />
              <V mt={9} n="merge" t="合并" />
              <V mt={10} n="split" t="分割" />
              <VSep $mt={2} />
              <V mt={12} n="alignI" t="对齐" off tri />
              <V mt={6} n="cloud" t="偏移" />
              <V mt={7} n="stretch" t="拉伸" />
              <VSep $mt={9} />
              <V mt={4} n="setI" t="设置" />
            </VBar>
            <CanvasWrap>
              <Canvas />
              <Dialog>
                <DlgHead>
                  <span>请输入屋面卷边高度</span>
                  <DlgClose>
                    <svg width="12" height="12" viewBox="0 0 12 12"><path d="M1.500 1.500l9 9M10.500 1.500l-9 9" stroke="#fff" strokeWidth="2.200" /></svg>
                  </DlgClose>
                </DlgHead>
                <DlgBody>
                  <DlgRow>
                    <span><T s="屋面卷边高度(mm):" /></span>
                    <DlgInput>250</DlgInput>
                  </DlgRow>
                  <DlgBtns>
                    <DlgBtn>确定</DlgBtn>
                    <DlgBtn>取消</DlgBtn>
                  </DlgBtns>
                </DlgBody>
              </Dialog>
            </CanvasWrap>
          </Work>
        </RightCol>
      </Body>
    </Root>
  );
}
